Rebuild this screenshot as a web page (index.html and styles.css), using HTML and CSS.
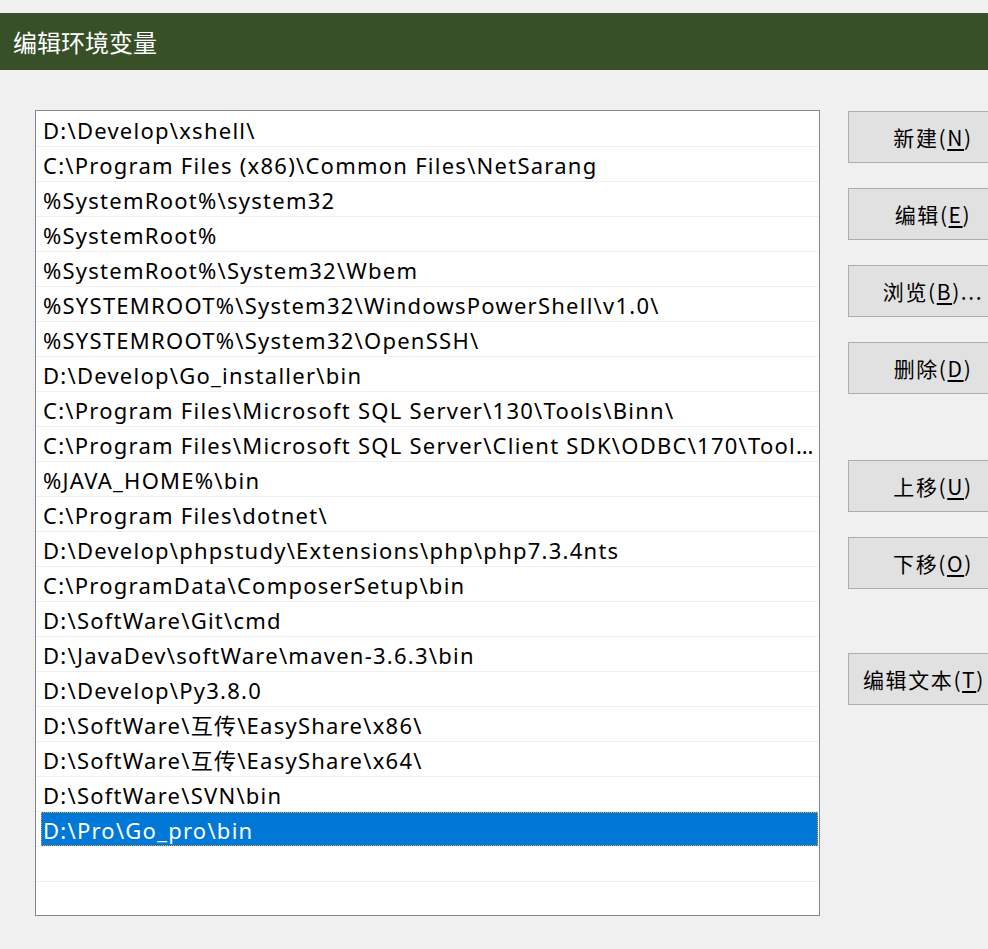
FILE: index.html
```html
<!DOCTYPE html>
<html lang="zh-CN">
<head>
<meta charset="utf-8">
<title>编辑环境变量</title>
<link rel="stylesheet" href="styles.css">
</head>
<body>
<div class="titlebar">编辑环境变量</div>
<div class="main">
  <div class="listbox">
    <div class="row"><span class="item">D:\Develop\xshell\</span></div>
    <div class="row"><span class="item">C:\Program Files (x86)\Common Files\NetSarang</span></div>
    <div class="row"><span class="item">%SystemRoot%\system32</span></div>
    <div class="row"><span class="item">%SystemRoot%</span></div>
    <div class="row"><span class="item">%SystemRoot%\System32\Wbem</span></div>
    <div class="row"><span class="item">%SYSTEMROOT%\System32\WindowsPowerShell\v1.0\</span></div>
    <div class="row"><span class="item">%SYSTEMROOT%\System32\OpenSSH\</span></div>
    <div class="row"><span class="item">D:\Develop\Go_installer\bin</span></div>
    <div class="row"><span class="item">C:\Program Files\Microsoft SQL Server\130\Tools\Binn\</span></div>
    <div class="row"><span class="item">C:\Program Files\Microsoft SQL Server\Client SDK\ODBC\170\Tools\Binn\</span></div>
    <div class="row"><span class="item">%JAVA_HOME%\bin</span></div>
    <div class="row"><span class="item">C:\Program Files\dotnet\</span></div>
    <div class="row"><span class="item">D:\Develop\phpstudy\Extensions\php\php7.3.4nts</span></div>
    <div class="row"><span class="item">C:\ProgramData\ComposerSetup\bin</span></div>
    <div class="row"><span class="item">D:\SoftWare\Git\cmd</span></div>
    <div class="row"><span class="item">D:\JavaDev\softWare\maven-3.6.3\bin</span></div>
    <div class="row"><span class="item">D:\Develop\Py3.8.0</span></div>
    <div class="row"><span class="item">D:\SoftWare\互传\EasyShare\x86\</span></div>
    <div class="row"><span class="item">D:\SoftWare\互传\EasyShare\x64\</span></div>
    <div class="row"><span class="item">D:\SoftWare\SVN\bin</span></div>
    <div class="row"><span class="item selected">D:\Pro\Go_pro\bin</span></div>
    <div class="row"><span class="item"></span></div>
    <div class="row"><span class="item"></span></div>
  </div>
  <div class="buttons">
    <div class="btn">新建(<u>N</u>)</div>
    <div class="btn">编辑(<u>E</u>)</div>
    <div class="btn">浏览(<u>B</u>)...</div>
    <div class="btn">删除(<u>D</u>)</div>
    <div class="btn btn-group">上移(<u>U</u>)</div>
    <div class="btn">下移(<u>O</u>)</div>
    <div class="btn btn-group2 btn-wide">编辑文本(<u>T</u>)</div>
  </div>
</div>
</body>
</html>
```

FILE: styles.css
```css
html, body {
  margin: 0;
  padding: 0;
  background: #f0f0f0;
  overflow: hidden;
  width: 988px;
  height: 949px;
}

body {
  font-family: "Noto Sans", "Noto Sans CJK SC", sans-serif;
}

.titlebar {
  margin-top: 13px;
  height: 57px;
  background: #375027;
  color: #ffffff;
  font-family: "Noto Sans CJK SC", sans-serif;
  font-size: 24px;
  display: flex;
  align-items: center;
  padding-left: 13px;
  box-sizing: border-box;
}

.main {
  display: flex;
  align-items: flex-start;
  padding-left: 35px;
  margin-top: 40px;
  width: 1200px;
}

.listbox {
  width: 785px;
  height: 806px;
  box-sizing: border-box;
  border: 1px solid #828790;
  background: #ffffff;
  padding-top: 1px;
  overflow: hidden;
  flex: none;
}

.row {
  height: 35px;
  box-sizing: border-box;
  border-bottom: 1px solid #f0f0f0;
  padding: 0 1px 0 5px;
  display: flex;
}

.item {
  display: block;
  flex: 1;
  min-width: 0;
  height: 34px;
  box-sizing: border-box;
  padding: 1px 3px 0 2px;
  font-size: 22px;
  letter-spacing: 1.25px;
  line-height: 32px;
  color: #000000;
  white-space: nowrap;
  overflow: hidden;
  text-overflow: ellipsis;
  border: 1px solid transparent;
  border-left: 0;
}

.item.selected {
  background: #0078d7;
  color: #ffffff;
  border: 1px dotted #f59a2c;
  padding-left: 1px;
}

.buttons {
  margin-left: 28px;
  margin-top: 1px;
  display: flex;
  flex-direction: column;
  flex: none;
}

.btn {
  width: 170px;
  height: 52px;
  box-sizing: border-box;
  background: #e1e1e1;
  border: 1px solid #adadad;
  font-family: "Noto Sans CJK SC", sans-serif;
  font-size: 21px;
  letter-spacing: 1.6px;
  color: #000000;
  display: flex;
  align-items: center;
  justify-content: center;
  margin-top: 25px;
}

.btn:first-child {
  margin-top: 0;
}

.btn u {
  text-underline-offset: 3px;
}

.btn-group {
  margin-top: 66px;
}

.btn-group2 {
  margin-top: 64px;
}

.btn-wide {
  padding-right: 18px;
}
```
